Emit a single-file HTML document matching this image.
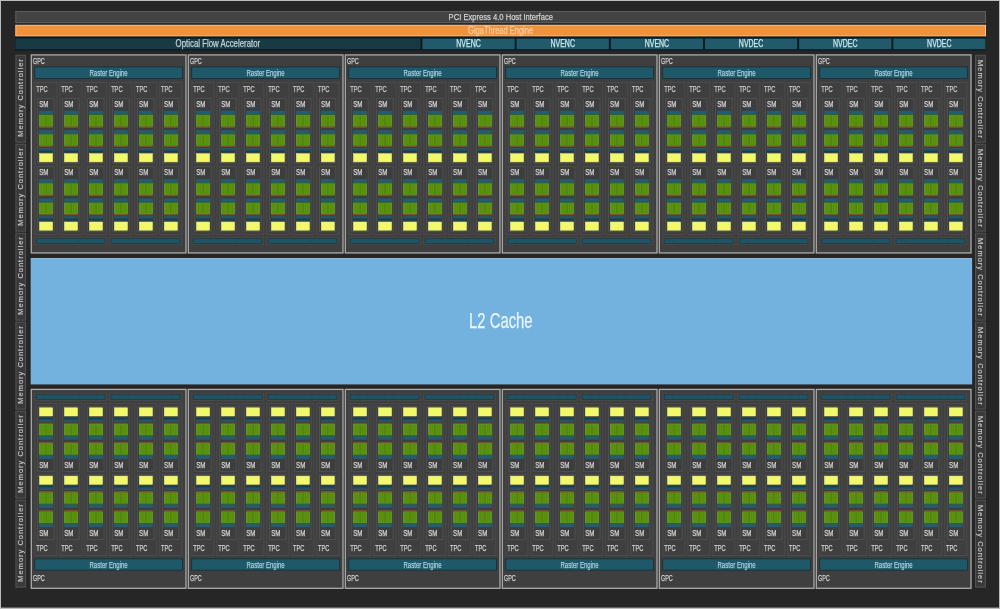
<!DOCTYPE html>
<html><head><meta charset="utf-8"><style>
html,body{margin:0;padding:0;background:#262626;}
svg{display:block;will-change:transform;}
text{font-family:"Liberation Sans",sans-serif;}
</style></head><body>
<svg width="1000" height="609" viewBox="0 0 1000 609">
<defs><g id="sm"><rect x="0.40" y="-0.40" width="16.40" height="64.60" fill="#3d3d3d" stroke="#525252" stroke-width="0.9"/><rect x="1.85" y="12.00" width="13.70" height="3.70" fill="#235d70"/><rect x="1.85" y="15.70" width="13.70" height="12.00" fill="#5b9310"/><rect x="3.90" y="16.30" width="0.60" height="11.00" fill="#548a0e"/><rect x="6.20" y="16.30" width="0.60" height="11.00" fill="#548a0e"/><rect x="10.85" y="16.30" width="0.60" height="11.00" fill="#548a0e"/><rect x="13.15" y="16.30" width="0.60" height="11.00" fill="#548a0e"/><rect x="8.30" y="16.20" width="0.90" height="11.10" fill="#497a10"/><rect x="2.15" y="16.50" width="13.10" height="10.90" fill="none" stroke="#6c9c34" stroke-width="0.6"/><rect x="1.85" y="15.50" width="13.70" height="0.80" fill="#2c5a2c"/><rect x="1.85" y="27.70" width="13.70" height="1.40" fill="#7a5228"/><rect x="1.85" y="31.30" width="13.70" height="3.70" fill="#235d70"/><rect x="1.85" y="35.00" width="13.70" height="11.80" fill="#5b9310"/><rect x="3.90" y="35.60" width="0.60" height="10.80" fill="#548a0e"/><rect x="6.20" y="35.60" width="0.60" height="10.80" fill="#548a0e"/><rect x="10.85" y="35.60" width="0.60" height="10.80" fill="#548a0e"/><rect x="13.15" y="35.60" width="0.60" height="10.80" fill="#548a0e"/><rect x="8.30" y="35.50" width="0.90" height="10.90" fill="#497a10"/><rect x="2.15" y="35.80" width="13.10" height="10.70" fill="none" stroke="#6c9c34" stroke-width="0.6"/><rect x="1.85" y="34.80" width="13.70" height="0.80" fill="#2c5a2c"/><rect x="1.85" y="46.80" width="13.70" height="1.40" fill="#7a5228"/><rect x="1.85" y="49.20" width="13.70" height="4.30" fill="#1e4a5a"/><rect x="1.85" y="49.20" width="13.70" height="1.60" fill="#285868"/><rect x="1.85" y="52.20" width="13.70" height="0.60" fill="#163642"/><rect x="2.15" y="54.90" width="13.10" height="8.20" fill="#f1f96b" stroke="#f3f98c" stroke-width="0.5"/></g><g id="tpc"><rect x="0.50" y="0.00" width="22.00" height="152.10" fill="#3f3f3f" stroke="#4b4b4b" stroke-width="1"/><use href="#sm" x="2.90" y="16.30"/><use href="#sm" x="2.90" y="84.60"/></g><g id="gpc"><use href="#tpc" x="3.80" y="82.50"/><use href="#tpc" x="28.76" y="82.50"/><use href="#tpc" x="53.72" y="82.50"/><use href="#tpc" x="78.68" y="82.50"/><use href="#tpc" x="103.64" y="82.50"/><use href="#tpc" x="128.60" y="82.50"/><rect x="4.30" y="237.70" width="71.40" height="6.40" fill="#3f3f3f" stroke="#4b4b4b" stroke-width="1"/><rect x="5.60" y="238.70" width="68.80" height="4.60" fill="#1f5466" stroke="#1c3840" stroke-width="0.6"/><rect x="13.90" y="239.20" width="0.60" height="3.60" fill="#1d4b5b"/><rect x="22.50" y="239.20" width="0.60" height="3.60" fill="#1d4b5b"/><rect x="31.10" y="239.20" width="0.60" height="3.60" fill="#1d4b5b"/><rect x="39.70" y="239.20" width="0.60" height="3.60" fill="#1d4b5b"/><rect x="48.30" y="239.20" width="0.60" height="3.60" fill="#1d4b5b"/><rect x="56.90" y="239.20" width="0.60" height="3.60" fill="#1d4b5b"/><rect x="65.50" y="239.20" width="0.60" height="3.60" fill="#1d4b5b"/><rect x="79.20" y="237.70" width="71.40" height="6.40" fill="#3f3f3f" stroke="#4b4b4b" stroke-width="1"/><rect x="80.50" y="238.70" width="68.80" height="4.60" fill="#1f5466" stroke="#1c3840" stroke-width="0.6"/><rect x="88.80" y="239.20" width="0.60" height="3.60" fill="#1d4b5b"/><rect x="97.40" y="239.20" width="0.60" height="3.60" fill="#1d4b5b"/><rect x="106.00" y="239.20" width="0.60" height="3.60" fill="#1d4b5b"/><rect x="114.60" y="239.20" width="0.60" height="3.60" fill="#1d4b5b"/><rect x="123.20" y="239.20" width="0.60" height="3.60" fill="#1d4b5b"/><rect x="131.80" y="239.20" width="0.60" height="3.60" fill="#1d4b5b"/><rect x="140.40" y="239.20" width="0.60" height="3.60" fill="#1d4b5b"/></g></defs>
<rect x="0.00" y="0.00" width="1000.00" height="609.00" fill="#bcbcbc"/>
<rect x="1.00" y="1.00" width="998.00" height="606.60" fill="#262626"/>
<rect x="15.80" y="11.60" width="969.70" height="11.00" fill="#434343" stroke="#606060" stroke-width="1"/>
<text x="500.80" y="19.60" font-size="9.88" fill="#d2d2d2" text-anchor="middle" textLength="104.40" lengthAdjust="spacingAndGlyphs" stroke="#d2d2d2" stroke-width="0.25">PCI Express 4.0 Host Interface</text>
<rect x="15.80" y="25.30" width="969.70" height="10.60" fill="#f0913b" stroke="#fbc492" stroke-width="1"/>
<text x="500.60" y="33.50" font-size="10.47" fill="#fccfa6" text-anchor="middle" textLength="65.00" lengthAdjust="spacingAndGlyphs" stroke="#fccfa6" stroke-width="0.25">GigaThread Engine</text>
<rect x="15.00" y="36.80" width="970.80" height="13.60" fill="#0c1b1f"/>
<rect x="15.40" y="38.60" width="405.00" height="10.60" fill="#183a44"/>
<text x="217.90" y="47.40" font-size="10.61" fill="#c3d3d6" text-anchor="middle" textLength="84.60" lengthAdjust="spacingAndGlyphs" stroke="#c3d3d6" stroke-width="0.25">Optical Flow Accelerator</text>
<rect x="422.40" y="38.60" width="92.30" height="10.60" fill="#215a6a"/>
<text x="468.55" y="47.30" font-size="10.76" fill="#cdeaf2" text-anchor="middle" textLength="24.50" lengthAdjust="spacingAndGlyphs" stroke="#cdeaf2" stroke-width="0.25">NVENC</text>
<rect x="516.58" y="38.60" width="92.30" height="10.60" fill="#215a6a"/>
<text x="562.73" y="47.30" font-size="10.76" fill="#cdeaf2" text-anchor="middle" textLength="24.50" lengthAdjust="spacingAndGlyphs" stroke="#cdeaf2" stroke-width="0.25">NVENC</text>
<rect x="610.76" y="38.60" width="92.30" height="10.60" fill="#215a6a"/>
<text x="656.91" y="47.30" font-size="10.76" fill="#cdeaf2" text-anchor="middle" textLength="24.50" lengthAdjust="spacingAndGlyphs" stroke="#cdeaf2" stroke-width="0.25">NVENC</text>
<rect x="704.94" y="38.60" width="92.30" height="10.60" fill="#215a6a"/>
<text x="751.09" y="47.30" font-size="10.76" fill="#cdeaf2" text-anchor="middle" textLength="24.50" lengthAdjust="spacingAndGlyphs" stroke="#cdeaf2" stroke-width="0.25">NVDEC</text>
<rect x="799.12" y="38.60" width="92.30" height="10.60" fill="#215a6a"/>
<text x="845.27" y="47.30" font-size="10.76" fill="#cdeaf2" text-anchor="middle" textLength="24.50" lengthAdjust="spacingAndGlyphs" stroke="#cdeaf2" stroke-width="0.25">NVDEC</text>
<rect x="893.30" y="38.60" width="92.10" height="10.60" fill="#215a6a"/>
<text x="939.35" y="47.30" font-size="10.76" fill="#cdeaf2" text-anchor="middle" textLength="24.50" lengthAdjust="spacingAndGlyphs" stroke="#cdeaf2" stroke-width="0.25">NVDEC</text>
<rect x="15.90" y="55.20" width="9.70" height="86.90" fill="#393939" stroke="#555555" stroke-width="1"/>
<g transform="translate(20.75,97.95) rotate(-90)">
<text x="0.00" y="2.70" font-size="7.50" fill="#cacaca" text-anchor="middle" textLength="77.60" lengthAdjust="spacing" stroke="#cacaca" stroke-width="0.15">Memory Controller</text>
</g>
<rect x="15.90" y="144.20" width="9.70" height="86.90" fill="#393939" stroke="#555555" stroke-width="1"/>
<g transform="translate(20.75,186.95) rotate(-90)">
<text x="0.00" y="2.70" font-size="7.50" fill="#cacaca" text-anchor="middle" textLength="77.60" lengthAdjust="spacing" stroke="#cacaca" stroke-width="0.15">Memory Controller</text>
</g>
<rect x="15.90" y="233.20" width="9.70" height="86.90" fill="#393939" stroke="#555555" stroke-width="1"/>
<g transform="translate(20.75,275.95) rotate(-90)">
<text x="0.00" y="2.70" font-size="7.50" fill="#cacaca" text-anchor="middle" textLength="77.60" lengthAdjust="spacing" stroke="#cacaca" stroke-width="0.15">Memory Controller</text>
</g>
<rect x="15.90" y="322.20" width="9.70" height="86.90" fill="#393939" stroke="#555555" stroke-width="1"/>
<g transform="translate(20.75,364.95) rotate(-90)">
<text x="0.00" y="2.70" font-size="7.50" fill="#cacaca" text-anchor="middle" textLength="77.60" lengthAdjust="spacing" stroke="#cacaca" stroke-width="0.15">Memory Controller</text>
</g>
<rect x="15.90" y="411.20" width="9.70" height="86.90" fill="#393939" stroke="#555555" stroke-width="1"/>
<g transform="translate(20.75,453.95) rotate(-90)">
<text x="0.00" y="2.70" font-size="7.50" fill="#cacaca" text-anchor="middle" textLength="77.60" lengthAdjust="spacing" stroke="#cacaca" stroke-width="0.15">Memory Controller</text>
</g>
<rect x="15.90" y="500.20" width="9.70" height="86.90" fill="#393939" stroke="#555555" stroke-width="1"/>
<g transform="translate(20.75,542.95) rotate(-90)">
<text x="0.00" y="2.70" font-size="7.50" fill="#cacaca" text-anchor="middle" textLength="77.60" lengthAdjust="spacing" stroke="#cacaca" stroke-width="0.15">Memory Controller</text>
</g>
<rect x="975.60" y="55.20" width="9.70" height="86.90" fill="#393939" stroke="#555555" stroke-width="1"/>
<g transform="translate(980.45,98.85) rotate(90)">
<text x="0.00" y="2.60" font-size="7.50" fill="#cacaca" text-anchor="middle" textLength="77.60" lengthAdjust="spacing" stroke="#cacaca" stroke-width="0.15">Memory Controller</text>
</g>
<rect x="975.60" y="144.20" width="9.70" height="86.90" fill="#393939" stroke="#555555" stroke-width="1"/>
<g transform="translate(980.45,187.85) rotate(90)">
<text x="0.00" y="2.60" font-size="7.50" fill="#cacaca" text-anchor="middle" textLength="77.60" lengthAdjust="spacing" stroke="#cacaca" stroke-width="0.15">Memory Controller</text>
</g>
<rect x="975.60" y="233.20" width="9.70" height="86.90" fill="#393939" stroke="#555555" stroke-width="1"/>
<g transform="translate(980.45,276.85) rotate(90)">
<text x="0.00" y="2.60" font-size="7.50" fill="#cacaca" text-anchor="middle" textLength="77.60" lengthAdjust="spacing" stroke="#cacaca" stroke-width="0.15">Memory Controller</text>
</g>
<rect x="975.60" y="322.20" width="9.70" height="86.90" fill="#393939" stroke="#555555" stroke-width="1"/>
<g transform="translate(980.45,365.85) rotate(90)">
<text x="0.00" y="2.60" font-size="7.50" fill="#cacaca" text-anchor="middle" textLength="77.60" lengthAdjust="spacing" stroke="#cacaca" stroke-width="0.15">Memory Controller</text>
</g>
<rect x="975.60" y="411.20" width="9.70" height="86.90" fill="#393939" stroke="#555555" stroke-width="1"/>
<g transform="translate(980.45,454.85) rotate(90)">
<text x="0.00" y="2.60" font-size="7.50" fill="#cacaca" text-anchor="middle" textLength="77.60" lengthAdjust="spacing" stroke="#cacaca" stroke-width="0.15">Memory Controller</text>
</g>
<rect x="975.60" y="500.20" width="9.70" height="86.90" fill="#393939" stroke="#555555" stroke-width="1"/>
<g transform="translate(980.45,543.85) rotate(90)">
<text x="0.00" y="2.60" font-size="7.50" fill="#cacaca" text-anchor="middle" textLength="77.60" lengthAdjust="spacing" stroke="#cacaca" stroke-width="0.15">Memory Controller</text>
</g>
<rect x="31.20" y="258.50" width="940.40" height="125.40" fill="#73b2de" stroke="#84bce4" stroke-width="1"/>
<text x="500.80" y="327.50" font-size="21.80" fill="#eaf5fc" text-anchor="middle" textLength="63.50" lengthAdjust="spacingAndGlyphs" stroke="#eaf5fc" stroke-width="0.25">L2 Cache</text>
<rect x="31.30" y="54.90" width="154.70" height="198.05" fill="#3f3f3f" stroke="#ababab" stroke-width="1.3"/>
<use href="#gpc" x="30.65" y="0"/>
<rect x="34.65" y="66.90" width="147.90" height="11.60" fill="#1f5869" stroke="#1f3238" stroke-width="1.0"/>
<text x="32.95" y="63.80" font-size="9.59" fill="#d0d0d0" text-anchor="start" textLength="11.80" lengthAdjust="spacingAndGlyphs" stroke="#d0d0d0" stroke-width="0.25">GPC</text>
<text x="108.60" y="75.90" font-size="9.88" fill="#a9d2de" text-anchor="middle" textLength="38.20" lengthAdjust="spacingAndGlyphs" stroke="#a9d2de" stroke-width="0.25">Raster Engine</text>
<text x="36.25" y="91.60" font-size="9.59" fill="#cacaca" text-anchor="start" textLength="11.40" lengthAdjust="spacingAndGlyphs" stroke="#cacaca" stroke-width="0.25">TPC</text>
<text x="39.25" y="106.60" font-size="9.16" fill="#d6d6d6" text-anchor="start" textLength="9.20" lengthAdjust="spacingAndGlyphs" stroke="#d6d6d6" stroke-width="0.25">SM</text>
<text x="39.25" y="174.90" font-size="9.16" fill="#d6d6d6" text-anchor="start" textLength="9.20" lengthAdjust="spacingAndGlyphs" stroke="#d6d6d6" stroke-width="0.25">SM</text>
<text x="61.21" y="91.60" font-size="9.59" fill="#cacaca" text-anchor="start" textLength="11.40" lengthAdjust="spacingAndGlyphs" stroke="#cacaca" stroke-width="0.25">TPC</text>
<text x="64.21" y="106.60" font-size="9.16" fill="#d6d6d6" text-anchor="start" textLength="9.20" lengthAdjust="spacingAndGlyphs" stroke="#d6d6d6" stroke-width="0.25">SM</text>
<text x="64.21" y="174.90" font-size="9.16" fill="#d6d6d6" text-anchor="start" textLength="9.20" lengthAdjust="spacingAndGlyphs" stroke="#d6d6d6" stroke-width="0.25">SM</text>
<text x="86.17" y="91.60" font-size="9.59" fill="#cacaca" text-anchor="start" textLength="11.40" lengthAdjust="spacingAndGlyphs" stroke="#cacaca" stroke-width="0.25">TPC</text>
<text x="89.17" y="106.60" font-size="9.16" fill="#d6d6d6" text-anchor="start" textLength="9.20" lengthAdjust="spacingAndGlyphs" stroke="#d6d6d6" stroke-width="0.25">SM</text>
<text x="89.17" y="174.90" font-size="9.16" fill="#d6d6d6" text-anchor="start" textLength="9.20" lengthAdjust="spacingAndGlyphs" stroke="#d6d6d6" stroke-width="0.25">SM</text>
<text x="111.13" y="91.60" font-size="9.59" fill="#cacaca" text-anchor="start" textLength="11.40" lengthAdjust="spacingAndGlyphs" stroke="#cacaca" stroke-width="0.25">TPC</text>
<text x="114.13" y="106.60" font-size="9.16" fill="#d6d6d6" text-anchor="start" textLength="9.20" lengthAdjust="spacingAndGlyphs" stroke="#d6d6d6" stroke-width="0.25">SM</text>
<text x="114.13" y="174.90" font-size="9.16" fill="#d6d6d6" text-anchor="start" textLength="9.20" lengthAdjust="spacingAndGlyphs" stroke="#d6d6d6" stroke-width="0.25">SM</text>
<text x="136.09" y="91.60" font-size="9.59" fill="#cacaca" text-anchor="start" textLength="11.40" lengthAdjust="spacingAndGlyphs" stroke="#cacaca" stroke-width="0.25">TPC</text>
<text x="139.09" y="106.60" font-size="9.16" fill="#d6d6d6" text-anchor="start" textLength="9.20" lengthAdjust="spacingAndGlyphs" stroke="#d6d6d6" stroke-width="0.25">SM</text>
<text x="139.09" y="174.90" font-size="9.16" fill="#d6d6d6" text-anchor="start" textLength="9.20" lengthAdjust="spacingAndGlyphs" stroke="#d6d6d6" stroke-width="0.25">SM</text>
<text x="161.05" y="91.60" font-size="9.59" fill="#cacaca" text-anchor="start" textLength="11.40" lengthAdjust="spacingAndGlyphs" stroke="#cacaca" stroke-width="0.25">TPC</text>
<text x="164.05" y="106.60" font-size="9.16" fill="#d6d6d6" text-anchor="start" textLength="9.20" lengthAdjust="spacingAndGlyphs" stroke="#d6d6d6" stroke-width="0.25">SM</text>
<text x="164.05" y="174.90" font-size="9.16" fill="#d6d6d6" text-anchor="start" textLength="9.20" lengthAdjust="spacingAndGlyphs" stroke="#d6d6d6" stroke-width="0.25">SM</text>
<rect x="31.30" y="389.40" width="154.70" height="198.90" fill="#3f3f3f" stroke="#ababab" stroke-width="1.3"/>
<use href="#gpc" transform="translate(30.65,638.0) scale(1,-1)"/>
<rect x="34.65" y="558.80" width="147.90" height="11.40" fill="#1f5869" stroke="#1f3238" stroke-width="1.0"/>
<text x="32.95" y="580.60" font-size="9.88" fill="#d0d0d0" text-anchor="start" textLength="11.80" lengthAdjust="spacingAndGlyphs" stroke="#d0d0d0" stroke-width="0.25">GPC</text>
<text x="108.60" y="567.70" font-size="9.88" fill="#a9d2de" text-anchor="middle" textLength="38.20" lengthAdjust="spacingAndGlyphs" stroke="#a9d2de" stroke-width="0.25">Raster Engine</text>
<text x="36.25" y="551.30" font-size="9.30" fill="#d0d0d0" text-anchor="start" textLength="11.40" lengthAdjust="spacingAndGlyphs" stroke="#d0d0d0" stroke-width="0.25">TPC</text>
<text x="39.25" y="535.90" font-size="9.16" fill="#d6d6d6" text-anchor="start" textLength="9.20" lengthAdjust="spacingAndGlyphs" stroke="#d6d6d6" stroke-width="0.25">SM</text>
<text x="39.25" y="467.60" font-size="9.16" fill="#d6d6d6" text-anchor="start" textLength="9.20" lengthAdjust="spacingAndGlyphs" stroke="#d6d6d6" stroke-width="0.25">SM</text>
<text x="61.21" y="551.30" font-size="9.30" fill="#d0d0d0" text-anchor="start" textLength="11.40" lengthAdjust="spacingAndGlyphs" stroke="#d0d0d0" stroke-width="0.25">TPC</text>
<text x="64.21" y="535.90" font-size="9.16" fill="#d6d6d6" text-anchor="start" textLength="9.20" lengthAdjust="spacingAndGlyphs" stroke="#d6d6d6" stroke-width="0.25">SM</text>
<text x="64.21" y="467.60" font-size="9.16" fill="#d6d6d6" text-anchor="start" textLength="9.20" lengthAdjust="spacingAndGlyphs" stroke="#d6d6d6" stroke-width="0.25">SM</text>
<text x="86.17" y="551.30" font-size="9.30" fill="#d0d0d0" text-anchor="start" textLength="11.40" lengthAdjust="spacingAndGlyphs" stroke="#d0d0d0" stroke-width="0.25">TPC</text>
<text x="89.17" y="535.90" font-size="9.16" fill="#d6d6d6" text-anchor="start" textLength="9.20" lengthAdjust="spacingAndGlyphs" stroke="#d6d6d6" stroke-width="0.25">SM</text>
<text x="89.17" y="467.60" font-size="9.16" fill="#d6d6d6" text-anchor="start" textLength="9.20" lengthAdjust="spacingAndGlyphs" stroke="#d6d6d6" stroke-width="0.25">SM</text>
<text x="111.13" y="551.30" font-size="9.30" fill="#d0d0d0" text-anchor="start" textLength="11.40" lengthAdjust="spacingAndGlyphs" stroke="#d0d0d0" stroke-width="0.25">TPC</text>
<text x="114.13" y="535.90" font-size="9.16" fill="#d6d6d6" text-anchor="start" textLength="9.20" lengthAdjust="spacingAndGlyphs" stroke="#d6d6d6" stroke-width="0.25">SM</text>
<text x="114.13" y="467.60" font-size="9.16" fill="#d6d6d6" text-anchor="start" textLength="9.20" lengthAdjust="spacingAndGlyphs" stroke="#d6d6d6" stroke-width="0.25">SM</text>
<text x="136.09" y="551.30" font-size="9.30" fill="#d0d0d0" text-anchor="start" textLength="11.40" lengthAdjust="spacingAndGlyphs" stroke="#d0d0d0" stroke-width="0.25">TPC</text>
<text x="139.09" y="535.90" font-size="9.16" fill="#d6d6d6" text-anchor="start" textLength="9.20" lengthAdjust="spacingAndGlyphs" stroke="#d6d6d6" stroke-width="0.25">SM</text>
<text x="139.09" y="467.60" font-size="9.16" fill="#d6d6d6" text-anchor="start" textLength="9.20" lengthAdjust="spacingAndGlyphs" stroke="#d6d6d6" stroke-width="0.25">SM</text>
<text x="161.05" y="551.30" font-size="9.30" fill="#d0d0d0" text-anchor="start" textLength="11.40" lengthAdjust="spacingAndGlyphs" stroke="#d0d0d0" stroke-width="0.25">TPC</text>
<text x="164.05" y="535.90" font-size="9.16" fill="#d6d6d6" text-anchor="start" textLength="9.20" lengthAdjust="spacingAndGlyphs" stroke="#d6d6d6" stroke-width="0.25">SM</text>
<text x="164.05" y="467.60" font-size="9.16" fill="#d6d6d6" text-anchor="start" textLength="9.20" lengthAdjust="spacingAndGlyphs" stroke="#d6d6d6" stroke-width="0.25">SM</text>
<rect x="188.30" y="54.90" width="154.70" height="198.05" fill="#3f3f3f" stroke="#ababab" stroke-width="1.3"/>
<use href="#gpc" x="187.65" y="0"/>
<rect x="191.65" y="66.90" width="147.90" height="11.60" fill="#1f5869" stroke="#1f3238" stroke-width="1.0"/>
<text x="189.95" y="63.80" font-size="9.59" fill="#d0d0d0" text-anchor="start" textLength="11.80" lengthAdjust="spacingAndGlyphs" stroke="#d0d0d0" stroke-width="0.25">GPC</text>
<text x="265.60" y="75.90" font-size="9.88" fill="#a9d2de" text-anchor="middle" textLength="38.20" lengthAdjust="spacingAndGlyphs" stroke="#a9d2de" stroke-width="0.25">Raster Engine</text>
<text x="193.25" y="91.60" font-size="9.59" fill="#cacaca" text-anchor="start" textLength="11.40" lengthAdjust="spacingAndGlyphs" stroke="#cacaca" stroke-width="0.25">TPC</text>
<text x="196.25" y="106.60" font-size="9.16" fill="#d6d6d6" text-anchor="start" textLength="9.20" lengthAdjust="spacingAndGlyphs" stroke="#d6d6d6" stroke-width="0.25">SM</text>
<text x="196.25" y="174.90" font-size="9.16" fill="#d6d6d6" text-anchor="start" textLength="9.20" lengthAdjust="spacingAndGlyphs" stroke="#d6d6d6" stroke-width="0.25">SM</text>
<text x="218.21" y="91.60" font-size="9.59" fill="#cacaca" text-anchor="start" textLength="11.40" lengthAdjust="spacingAndGlyphs" stroke="#cacaca" stroke-width="0.25">TPC</text>
<text x="221.21" y="106.60" font-size="9.16" fill="#d6d6d6" text-anchor="start" textLength="9.20" lengthAdjust="spacingAndGlyphs" stroke="#d6d6d6" stroke-width="0.25">SM</text>
<text x="221.21" y="174.90" font-size="9.16" fill="#d6d6d6" text-anchor="start" textLength="9.20" lengthAdjust="spacingAndGlyphs" stroke="#d6d6d6" stroke-width="0.25">SM</text>
<text x="243.17" y="91.60" font-size="9.59" fill="#cacaca" text-anchor="start" textLength="11.40" lengthAdjust="spacingAndGlyphs" stroke="#cacaca" stroke-width="0.25">TPC</text>
<text x="246.17" y="106.60" font-size="9.16" fill="#d6d6d6" text-anchor="start" textLength="9.20" lengthAdjust="spacingAndGlyphs" stroke="#d6d6d6" stroke-width="0.25">SM</text>
<text x="246.17" y="174.90" font-size="9.16" fill="#d6d6d6" text-anchor="start" textLength="9.20" lengthAdjust="spacingAndGlyphs" stroke="#d6d6d6" stroke-width="0.25">SM</text>
<text x="268.13" y="91.60" font-size="9.59" fill="#cacaca" text-anchor="start" textLength="11.40" lengthAdjust="spacingAndGlyphs" stroke="#cacaca" stroke-width="0.25">TPC</text>
<text x="271.13" y="106.60" font-size="9.16" fill="#d6d6d6" text-anchor="start" textLength="9.20" lengthAdjust="spacingAndGlyphs" stroke="#d6d6d6" stroke-width="0.25">SM</text>
<text x="271.13" y="174.90" font-size="9.16" fill="#d6d6d6" text-anchor="start" textLength="9.20" lengthAdjust="spacingAndGlyphs" stroke="#d6d6d6" stroke-width="0.25">SM</text>
<text x="293.09" y="91.60" font-size="9.59" fill="#cacaca" text-anchor="start" textLength="11.40" lengthAdjust="spacingAndGlyphs" stroke="#cacaca" stroke-width="0.25">TPC</text>
<text x="296.09" y="106.60" font-size="9.16" fill="#d6d6d6" text-anchor="start" textLength="9.20" lengthAdjust="spacingAndGlyphs" stroke="#d6d6d6" stroke-width="0.25">SM</text>
<text x="296.09" y="174.90" font-size="9.16" fill="#d6d6d6" text-anchor="start" textLength="9.20" lengthAdjust="spacingAndGlyphs" stroke="#d6d6d6" stroke-width="0.25">SM</text>
<text x="318.05" y="91.60" font-size="9.59" fill="#cacaca" text-anchor="start" textLength="11.40" lengthAdjust="spacingAndGlyphs" stroke="#cacaca" stroke-width="0.25">TPC</text>
<text x="321.05" y="106.60" font-size="9.16" fill="#d6d6d6" text-anchor="start" textLength="9.20" lengthAdjust="spacingAndGlyphs" stroke="#d6d6d6" stroke-width="0.25">SM</text>
<text x="321.05" y="174.90" font-size="9.16" fill="#d6d6d6" text-anchor="start" textLength="9.20" lengthAdjust="spacingAndGlyphs" stroke="#d6d6d6" stroke-width="0.25">SM</text>
<rect x="188.30" y="389.40" width="154.70" height="198.90" fill="#3f3f3f" stroke="#ababab" stroke-width="1.3"/>
<use href="#gpc" transform="translate(187.65,638.0) scale(1,-1)"/>
<rect x="191.65" y="558.80" width="147.90" height="11.40" fill="#1f5869" stroke="#1f3238" stroke-width="1.0"/>
<text x="189.95" y="580.60" font-size="9.88" fill="#d0d0d0" text-anchor="start" textLength="11.80" lengthAdjust="spacingAndGlyphs" stroke="#d0d0d0" stroke-width="0.25">GPC</text>
<text x="265.60" y="567.70" font-size="9.88" fill="#a9d2de" text-anchor="middle" textLength="38.20" lengthAdjust="spacingAndGlyphs" stroke="#a9d2de" stroke-width="0.25">Raster Engine</text>
<text x="193.25" y="551.30" font-size="9.30" fill="#d0d0d0" text-anchor="start" textLength="11.40" lengthAdjust="spacingAndGlyphs" stroke="#d0d0d0" stroke-width="0.25">TPC</text>
<text x="196.25" y="535.90" font-size="9.16" fill="#d6d6d6" text-anchor="start" textLength="9.20" lengthAdjust="spacingAndGlyphs" stroke="#d6d6d6" stroke-width="0.25">SM</text>
<text x="196.25" y="467.60" font-size="9.16" fill="#d6d6d6" text-anchor="start" textLength="9.20" lengthAdjust="spacingAndGlyphs" stroke="#d6d6d6" stroke-width="0.25">SM</text>
<text x="218.21" y="551.30" font-size="9.30" fill="#d0d0d0" text-anchor="start" textLength="11.40" lengthAdjust="spacingAndGlyphs" stroke="#d0d0d0" stroke-width="0.25">TPC</text>
<text x="221.21" y="535.90" font-size="9.16" fill="#d6d6d6" text-anchor="start" textLength="9.20" lengthAdjust="spacingAndGlyphs" stroke="#d6d6d6" stroke-width="0.25">SM</text>
<text x="221.21" y="467.60" font-size="9.16" fill="#d6d6d6" text-anchor="start" textLength="9.20" lengthAdjust="spacingAndGlyphs" stroke="#d6d6d6" stroke-width="0.25">SM</text>
<text x="243.17" y="551.30" font-size="9.30" fill="#d0d0d0" text-anchor="start" textLength="11.40" lengthAdjust="spacingAndGlyphs" stroke="#d0d0d0" stroke-width="0.25">TPC</text>
<text x="246.17" y="535.90" font-size="9.16" fill="#d6d6d6" text-anchor="start" textLength="9.20" lengthAdjust="spacingAndGlyphs" stroke="#d6d6d6" stroke-width="0.25">SM</text>
<text x="246.17" y="467.60" font-size="9.16" fill="#d6d6d6" text-anchor="start" textLength="9.20" lengthAdjust="spacingAndGlyphs" stroke="#d6d6d6" stroke-width="0.25">SM</text>
<text x="268.13" y="551.30" font-size="9.30" fill="#d0d0d0" text-anchor="start" textLength="11.40" lengthAdjust="spacingAndGlyphs" stroke="#d0d0d0" stroke-width="0.25">TPC</text>
<text x="271.13" y="535.90" font-size="9.16" fill="#d6d6d6" text-anchor="start" textLength="9.20" lengthAdjust="spacingAndGlyphs" stroke="#d6d6d6" stroke-width="0.25">SM</text>
<text x="271.13" y="467.60" font-size="9.16" fill="#d6d6d6" text-anchor="start" textLength="9.20" lengthAdjust="spacingAndGlyphs" stroke="#d6d6d6" stroke-width="0.25">SM</text>
<text x="293.09" y="551.30" font-size="9.30" fill="#d0d0d0" text-anchor="start" textLength="11.40" lengthAdjust="spacingAndGlyphs" stroke="#d0d0d0" stroke-width="0.25">TPC</text>
<text x="296.09" y="535.90" font-size="9.16" fill="#d6d6d6" text-anchor="start" textLength="9.20" lengthAdjust="spacingAndGlyphs" stroke="#d6d6d6" stroke-width="0.25">SM</text>
<text x="296.09" y="467.60" font-size="9.16" fill="#d6d6d6" text-anchor="start" textLength="9.20" lengthAdjust="spacingAndGlyphs" stroke="#d6d6d6" stroke-width="0.25">SM</text>
<text x="318.05" y="551.30" font-size="9.30" fill="#d0d0d0" text-anchor="start" textLength="11.40" lengthAdjust="spacingAndGlyphs" stroke="#d0d0d0" stroke-width="0.25">TPC</text>
<text x="321.05" y="535.90" font-size="9.16" fill="#d6d6d6" text-anchor="start" textLength="9.20" lengthAdjust="spacingAndGlyphs" stroke="#d6d6d6" stroke-width="0.25">SM</text>
<text x="321.05" y="467.60" font-size="9.16" fill="#d6d6d6" text-anchor="start" textLength="9.20" lengthAdjust="spacingAndGlyphs" stroke="#d6d6d6" stroke-width="0.25">SM</text>
<rect x="345.30" y="54.90" width="154.70" height="198.05" fill="#3f3f3f" stroke="#ababab" stroke-width="1.3"/>
<use href="#gpc" x="344.65" y="0"/>
<rect x="348.65" y="66.90" width="147.90" height="11.60" fill="#1f5869" stroke="#1f3238" stroke-width="1.0"/>
<text x="346.95" y="63.80" font-size="9.59" fill="#d0d0d0" text-anchor="start" textLength="11.80" lengthAdjust="spacingAndGlyphs" stroke="#d0d0d0" stroke-width="0.25">GPC</text>
<text x="422.60" y="75.90" font-size="9.88" fill="#a9d2de" text-anchor="middle" textLength="38.20" lengthAdjust="spacingAndGlyphs" stroke="#a9d2de" stroke-width="0.25">Raster Engine</text>
<text x="350.25" y="91.60" font-size="9.59" fill="#cacaca" text-anchor="start" textLength="11.40" lengthAdjust="spacingAndGlyphs" stroke="#cacaca" stroke-width="0.25">TPC</text>
<text x="353.25" y="106.60" font-size="9.16" fill="#d6d6d6" text-anchor="start" textLength="9.20" lengthAdjust="spacingAndGlyphs" stroke="#d6d6d6" stroke-width="0.25">SM</text>
<text x="353.25" y="174.90" font-size="9.16" fill="#d6d6d6" text-anchor="start" textLength="9.20" lengthAdjust="spacingAndGlyphs" stroke="#d6d6d6" stroke-width="0.25">SM</text>
<text x="375.21" y="91.60" font-size="9.59" fill="#cacaca" text-anchor="start" textLength="11.40" lengthAdjust="spacingAndGlyphs" stroke="#cacaca" stroke-width="0.25">TPC</text>
<text x="378.21" y="106.60" font-size="9.16" fill="#d6d6d6" text-anchor="start" textLength="9.20" lengthAdjust="spacingAndGlyphs" stroke="#d6d6d6" stroke-width="0.25">SM</text>
<text x="378.21" y="174.90" font-size="9.16" fill="#d6d6d6" text-anchor="start" textLength="9.20" lengthAdjust="spacingAndGlyphs" stroke="#d6d6d6" stroke-width="0.25">SM</text>
<text x="400.17" y="91.60" font-size="9.59" fill="#cacaca" text-anchor="start" textLength="11.40" lengthAdjust="spacingAndGlyphs" stroke="#cacaca" stroke-width="0.25">TPC</text>
<text x="403.17" y="106.60" font-size="9.16" fill="#d6d6d6" text-anchor="start" textLength="9.20" lengthAdjust="spacingAndGlyphs" stroke="#d6d6d6" stroke-width="0.25">SM</text>
<text x="403.17" y="174.90" font-size="9.16" fill="#d6d6d6" text-anchor="start" textLength="9.20" lengthAdjust="spacingAndGlyphs" stroke="#d6d6d6" stroke-width="0.25">SM</text>
<text x="425.13" y="91.60" font-size="9.59" fill="#cacaca" text-anchor="start" textLength="11.40" lengthAdjust="spacingAndGlyphs" stroke="#cacaca" stroke-width="0.25">TPC</text>
<text x="428.13" y="106.60" font-size="9.16" fill="#d6d6d6" text-anchor="start" textLength="9.20" lengthAdjust="spacingAndGlyphs" stroke="#d6d6d6" stroke-width="0.25">SM</text>
<text x="428.13" y="174.90" font-size="9.16" fill="#d6d6d6" text-anchor="start" textLength="9.20" lengthAdjust="spacingAndGlyphs" stroke="#d6d6d6" stroke-width="0.25">SM</text>
<text x="450.09" y="91.60" font-size="9.59" fill="#cacaca" text-anchor="start" textLength="11.40" lengthAdjust="spacingAndGlyphs" stroke="#cacaca" stroke-width="0.25">TPC</text>
<text x="453.09" y="106.60" font-size="9.16" fill="#d6d6d6" text-anchor="start" textLength="9.20" lengthAdjust="spacingAndGlyphs" stroke="#d6d6d6" stroke-width="0.25">SM</text>
<text x="453.09" y="174.90" font-size="9.16" fill="#d6d6d6" text-anchor="start" textLength="9.20" lengthAdjust="spacingAndGlyphs" stroke="#d6d6d6" stroke-width="0.25">SM</text>
<text x="475.05" y="91.60" font-size="9.59" fill="#cacaca" text-anchor="start" textLength="11.40" lengthAdjust="spacingAndGlyphs" stroke="#cacaca" stroke-width="0.25">TPC</text>
<text x="478.05" y="106.60" font-size="9.16" fill="#d6d6d6" text-anchor="start" textLength="9.20" lengthAdjust="spacingAndGlyphs" stroke="#d6d6d6" stroke-width="0.25">SM</text>
<text x="478.05" y="174.90" font-size="9.16" fill="#d6d6d6" text-anchor="start" textLength="9.20" lengthAdjust="spacingAndGlyphs" stroke="#d6d6d6" stroke-width="0.25">SM</text>
<rect x="345.30" y="389.40" width="154.70" height="198.90" fill="#3f3f3f" stroke="#ababab" stroke-width="1.3"/>
<use href="#gpc" transform="translate(344.65,638.0) scale(1,-1)"/>
<rect x="348.65" y="558.80" width="147.90" height="11.40" fill="#1f5869" stroke="#1f3238" stroke-width="1.0"/>
<text x="346.95" y="580.60" font-size="9.88" fill="#d0d0d0" text-anchor="start" textLength="11.80" lengthAdjust="spacingAndGlyphs" stroke="#d0d0d0" stroke-width="0.25">GPC</text>
<text x="422.60" y="567.70" font-size="9.88" fill="#a9d2de" text-anchor="middle" textLength="38.20" lengthAdjust="spacingAndGlyphs" stroke="#a9d2de" stroke-width="0.25">Raster Engine</text>
<text x="350.25" y="551.30" font-size="9.30" fill="#d0d0d0" text-anchor="start" textLength="11.40" lengthAdjust="spacingAndGlyphs" stroke="#d0d0d0" stroke-width="0.25">TPC</text>
<text x="353.25" y="535.90" font-size="9.16" fill="#d6d6d6" text-anchor="start" textLength="9.20" lengthAdjust="spacingAndGlyphs" stroke="#d6d6d6" stroke-width="0.25">SM</text>
<text x="353.25" y="467.60" font-size="9.16" fill="#d6d6d6" text-anchor="start" textLength="9.20" lengthAdjust="spacingAndGlyphs" stroke="#d6d6d6" stroke-width="0.25">SM</text>
<text x="375.21" y="551.30" font-size="9.30" fill="#d0d0d0" text-anchor="start" textLength="11.40" lengthAdjust="spacingAndGlyphs" stroke="#d0d0d0" stroke-width="0.25">TPC</text>
<text x="378.21" y="535.90" font-size="9.16" fill="#d6d6d6" text-anchor="start" textLength="9.20" lengthAdjust="spacingAndGlyphs" stroke="#d6d6d6" stroke-width="0.25">SM</text>
<text x="378.21" y="467.60" font-size="9.16" fill="#d6d6d6" text-anchor="start" textLength="9.20" lengthAdjust="spacingAndGlyphs" stroke="#d6d6d6" stroke-width="0.25">SM</text>
<text x="400.17" y="551.30" font-size="9.30" fill="#d0d0d0" text-anchor="start" textLength="11.40" lengthAdjust="spacingAndGlyphs" stroke="#d0d0d0" stroke-width="0.25">TPC</text>
<text x="403.17" y="535.90" font-size="9.16" fill="#d6d6d6" text-anchor="start" textLength="9.20" lengthAdjust="spacingAndGlyphs" stroke="#d6d6d6" stroke-width="0.25">SM</text>
<text x="403.17" y="467.60" font-size="9.16" fill="#d6d6d6" text-anchor="start" textLength="9.20" lengthAdjust="spacingAndGlyphs" stroke="#d6d6d6" stroke-width="0.25">SM</text>
<text x="425.13" y="551.30" font-size="9.30" fill="#d0d0d0" text-anchor="start" textLength="11.40" lengthAdjust="spacingAndGlyphs" stroke="#d0d0d0" stroke-width="0.25">TPC</text>
<text x="428.13" y="535.90" font-size="9.16" fill="#d6d6d6" text-anchor="start" textLength="9.20" lengthAdjust="spacingAndGlyphs" stroke="#d6d6d6" stroke-width="0.25">SM</text>
<text x="428.13" y="467.60" font-size="9.16" fill="#d6d6d6" text-anchor="start" textLength="9.20" lengthAdjust="spacingAndGlyphs" stroke="#d6d6d6" stroke-width="0.25">SM</text>
<text x="450.09" y="551.30" font-size="9.30" fill="#d0d0d0" text-anchor="start" textLength="11.40" lengthAdjust="spacingAndGlyphs" stroke="#d0d0d0" stroke-width="0.25">TPC</text>
<text x="453.09" y="535.90" font-size="9.16" fill="#d6d6d6" text-anchor="start" textLength="9.20" lengthAdjust="spacingAndGlyphs" stroke="#d6d6d6" stroke-width="0.25">SM</text>
<text x="453.09" y="467.60" font-size="9.16" fill="#d6d6d6" text-anchor="start" textLength="9.20" lengthAdjust="spacingAndGlyphs" stroke="#d6d6d6" stroke-width="0.25">SM</text>
<text x="475.05" y="551.30" font-size="9.30" fill="#d0d0d0" text-anchor="start" textLength="11.40" lengthAdjust="spacingAndGlyphs" stroke="#d0d0d0" stroke-width="0.25">TPC</text>
<text x="478.05" y="535.90" font-size="9.16" fill="#d6d6d6" text-anchor="start" textLength="9.20" lengthAdjust="spacingAndGlyphs" stroke="#d6d6d6" stroke-width="0.25">SM</text>
<text x="478.05" y="467.60" font-size="9.16" fill="#d6d6d6" text-anchor="start" textLength="9.20" lengthAdjust="spacingAndGlyphs" stroke="#d6d6d6" stroke-width="0.25">SM</text>
<rect x="502.30" y="54.90" width="154.70" height="198.05" fill="#3f3f3f" stroke="#ababab" stroke-width="1.3"/>
<use href="#gpc" x="501.65" y="0"/>
<rect x="505.65" y="66.90" width="147.90" height="11.60" fill="#1f5869" stroke="#1f3238" stroke-width="1.0"/>
<text x="503.95" y="63.80" font-size="9.59" fill="#d0d0d0" text-anchor="start" textLength="11.80" lengthAdjust="spacingAndGlyphs" stroke="#d0d0d0" stroke-width="0.25">GPC</text>
<text x="579.60" y="75.90" font-size="9.88" fill="#a9d2de" text-anchor="middle" textLength="38.20" lengthAdjust="spacingAndGlyphs" stroke="#a9d2de" stroke-width="0.25">Raster Engine</text>
<text x="507.25" y="91.60" font-size="9.59" fill="#cacaca" text-anchor="start" textLength="11.40" lengthAdjust="spacingAndGlyphs" stroke="#cacaca" stroke-width="0.25">TPC</text>
<text x="510.25" y="106.60" font-size="9.16" fill="#d6d6d6" text-anchor="start" textLength="9.20" lengthAdjust="spacingAndGlyphs" stroke="#d6d6d6" stroke-width="0.25">SM</text>
<text x="510.25" y="174.90" font-size="9.16" fill="#d6d6d6" text-anchor="start" textLength="9.20" lengthAdjust="spacingAndGlyphs" stroke="#d6d6d6" stroke-width="0.25">SM</text>
<text x="532.21" y="91.60" font-size="9.59" fill="#cacaca" text-anchor="start" textLength="11.40" lengthAdjust="spacingAndGlyphs" stroke="#cacaca" stroke-width="0.25">TPC</text>
<text x="535.21" y="106.60" font-size="9.16" fill="#d6d6d6" text-anchor="start" textLength="9.20" lengthAdjust="spacingAndGlyphs" stroke="#d6d6d6" stroke-width="0.25">SM</text>
<text x="535.21" y="174.90" font-size="9.16" fill="#d6d6d6" text-anchor="start" textLength="9.20" lengthAdjust="spacingAndGlyphs" stroke="#d6d6d6" stroke-width="0.25">SM</text>
<text x="557.17" y="91.60" font-size="9.59" fill="#cacaca" text-anchor="start" textLength="11.40" lengthAdjust="spacingAndGlyphs" stroke="#cacaca" stroke-width="0.25">TPC</text>
<text x="560.17" y="106.60" font-size="9.16" fill="#d6d6d6" text-anchor="start" textLength="9.20" lengthAdjust="spacingAndGlyphs" stroke="#d6d6d6" stroke-width="0.25">SM</text>
<text x="560.17" y="174.90" font-size="9.16" fill="#d6d6d6" text-anchor="start" textLength="9.20" lengthAdjust="spacingAndGlyphs" stroke="#d6d6d6" stroke-width="0.25">SM</text>
<text x="582.13" y="91.60" font-size="9.59" fill="#cacaca" text-anchor="start" textLength="11.40" lengthAdjust="spacingAndGlyphs" stroke="#cacaca" stroke-width="0.25">TPC</text>
<text x="585.13" y="106.60" font-size="9.16" fill="#d6d6d6" text-anchor="start" textLength="9.20" lengthAdjust="spacingAndGlyphs" stroke="#d6d6d6" stroke-width="0.25">SM</text>
<text x="585.13" y="174.90" font-size="9.16" fill="#d6d6d6" text-anchor="start" textLength="9.20" lengthAdjust="spacingAndGlyphs" stroke="#d6d6d6" stroke-width="0.25">SM</text>
<text x="607.09" y="91.60" font-size="9.59" fill="#cacaca" text-anchor="start" textLength="11.40" lengthAdjust="spacingAndGlyphs" stroke="#cacaca" stroke-width="0.25">TPC</text>
<text x="610.09" y="106.60" font-size="9.16" fill="#d6d6d6" text-anchor="start" textLength="9.20" lengthAdjust="spacingAndGlyphs" stroke="#d6d6d6" stroke-width="0.25">SM</text>
<text x="610.09" y="174.90" font-size="9.16" fill="#d6d6d6" text-anchor="start" textLength="9.20" lengthAdjust="spacingAndGlyphs" stroke="#d6d6d6" stroke-width="0.25">SM</text>
<text x="632.05" y="91.60" font-size="9.59" fill="#cacaca" text-anchor="start" textLength="11.40" lengthAdjust="spacingAndGlyphs" stroke="#cacaca" stroke-width="0.25">TPC</text>
<text x="635.05" y="106.60" font-size="9.16" fill="#d6d6d6" text-anchor="start" textLength="9.20" lengthAdjust="spacingAndGlyphs" stroke="#d6d6d6" stroke-width="0.25">SM</text>
<text x="635.05" y="174.90" font-size="9.16" fill="#d6d6d6" text-anchor="start" textLength="9.20" lengthAdjust="spacingAndGlyphs" stroke="#d6d6d6" stroke-width="0.25">SM</text>
<rect x="502.30" y="389.40" width="154.70" height="198.90" fill="#3f3f3f" stroke="#ababab" stroke-width="1.3"/>
<use href="#gpc" transform="translate(501.65,638.0) scale(1,-1)"/>
<rect x="505.65" y="558.80" width="147.90" height="11.40" fill="#1f5869" stroke="#1f3238" stroke-width="1.0"/>
<text x="503.95" y="580.60" font-size="9.88" fill="#d0d0d0" text-anchor="start" textLength="11.80" lengthAdjust="spacingAndGlyphs" stroke="#d0d0d0" stroke-width="0.25">GPC</text>
<text x="579.60" y="567.70" font-size="9.88" fill="#a9d2de" text-anchor="middle" textLength="38.20" lengthAdjust="spacingAndGlyphs" stroke="#a9d2de" stroke-width="0.25">Raster Engine</text>
<text x="507.25" y="551.30" font-size="9.30" fill="#d0d0d0" text-anchor="start" textLength="11.40" lengthAdjust="spacingAndGlyphs" stroke="#d0d0d0" stroke-width="0.25">TPC</text>
<text x="510.25" y="535.90" font-size="9.16" fill="#d6d6d6" text-anchor="start" textLength="9.20" lengthAdjust="spacingAndGlyphs" stroke="#d6d6d6" stroke-width="0.25">SM</text>
<text x="510.25" y="467.60" font-size="9.16" fill="#d6d6d6" text-anchor="start" textLength="9.20" lengthAdjust="spacingAndGlyphs" stroke="#d6d6d6" stroke-width="0.25">SM</text>
<text x="532.21" y="551.30" font-size="9.30" fill="#d0d0d0" text-anchor="start" textLength="11.40" lengthAdjust="spacingAndGlyphs" stroke="#d0d0d0" stroke-width="0.25">TPC</text>
<text x="535.21" y="535.90" font-size="9.16" fill="#d6d6d6" text-anchor="start" textLength="9.20" lengthAdjust="spacingAndGlyphs" stroke="#d6d6d6" stroke-width="0.25">SM</text>
<text x="535.21" y="467.60" font-size="9.16" fill="#d6d6d6" text-anchor="start" textLength="9.20" lengthAdjust="spacingAndGlyphs" stroke="#d6d6d6" stroke-width="0.25">SM</text>
<text x="557.17" y="551.30" font-size="9.30" fill="#d0d0d0" text-anchor="start" textLength="11.40" lengthAdjust="spacingAndGlyphs" stroke="#d0d0d0" stroke-width="0.25">TPC</text>
<text x="560.17" y="535.90" font-size="9.16" fill="#d6d6d6" text-anchor="start" textLength="9.20" lengthAdjust="spacingAndGlyphs" stroke="#d6d6d6" stroke-width="0.25">SM</text>
<text x="560.17" y="467.60" font-size="9.16" fill="#d6d6d6" text-anchor="start" textLength="9.20" lengthAdjust="spacingAndGlyphs" stroke="#d6d6d6" stroke-width="0.25">SM</text>
<text x="582.13" y="551.30" font-size="9.30" fill="#d0d0d0" text-anchor="start" textLength="11.40" lengthAdjust="spacingAndGlyphs" stroke="#d0d0d0" stroke-width="0.25">TPC</text>
<text x="585.13" y="535.90" font-size="9.16" fill="#d6d6d6" text-anchor="start" textLength="9.20" lengthAdjust="spacingAndGlyphs" stroke="#d6d6d6" stroke-width="0.25">SM</text>
<text x="585.13" y="467.60" font-size="9.16" fill="#d6d6d6" text-anchor="start" textLength="9.20" lengthAdjust="spacingAndGlyphs" stroke="#d6d6d6" stroke-width="0.25">SM</text>
<text x="607.09" y="551.30" font-size="9.30" fill="#d0d0d0" text-anchor="start" textLength="11.40" lengthAdjust="spacingAndGlyphs" stroke="#d0d0d0" stroke-width="0.25">TPC</text>
<text x="610.09" y="535.90" font-size="9.16" fill="#d6d6d6" text-anchor="start" textLength="9.20" lengthAdjust="spacingAndGlyphs" stroke="#d6d6d6" stroke-width="0.25">SM</text>
<text x="610.09" y="467.60" font-size="9.16" fill="#d6d6d6" text-anchor="start" textLength="9.20" lengthAdjust="spacingAndGlyphs" stroke="#d6d6d6" stroke-width="0.25">SM</text>
<text x="632.05" y="551.30" font-size="9.30" fill="#d0d0d0" text-anchor="start" textLength="11.40" lengthAdjust="spacingAndGlyphs" stroke="#d0d0d0" stroke-width="0.25">TPC</text>
<text x="635.05" y="535.90" font-size="9.16" fill="#d6d6d6" text-anchor="start" textLength="9.20" lengthAdjust="spacingAndGlyphs" stroke="#d6d6d6" stroke-width="0.25">SM</text>
<text x="635.05" y="467.60" font-size="9.16" fill="#d6d6d6" text-anchor="start" textLength="9.20" lengthAdjust="spacingAndGlyphs" stroke="#d6d6d6" stroke-width="0.25">SM</text>
<rect x="659.30" y="54.90" width="154.70" height="198.05" fill="#3f3f3f" stroke="#ababab" stroke-width="1.3"/>
<use href="#gpc" x="658.65" y="0"/>
<rect x="662.65" y="66.90" width="147.90" height="11.60" fill="#1f5869" stroke="#1f3238" stroke-width="1.0"/>
<text x="660.95" y="63.80" font-size="9.59" fill="#d0d0d0" text-anchor="start" textLength="11.80" lengthAdjust="spacingAndGlyphs" stroke="#d0d0d0" stroke-width="0.25">GPC</text>
<text x="736.60" y="75.90" font-size="9.88" fill="#a9d2de" text-anchor="middle" textLength="38.20" lengthAdjust="spacingAndGlyphs" stroke="#a9d2de" stroke-width="0.25">Raster Engine</text>
<text x="664.25" y="91.60" font-size="9.59" fill="#cacaca" text-anchor="start" textLength="11.40" lengthAdjust="spacingAndGlyphs" stroke="#cacaca" stroke-width="0.25">TPC</text>
<text x="667.25" y="106.60" font-size="9.16" fill="#d6d6d6" text-anchor="start" textLength="9.20" lengthAdjust="spacingAndGlyphs" stroke="#d6d6d6" stroke-width="0.25">SM</text>
<text x="667.25" y="174.90" font-size="9.16" fill="#d6d6d6" text-anchor="start" textLength="9.20" lengthAdjust="spacingAndGlyphs" stroke="#d6d6d6" stroke-width="0.25">SM</text>
<text x="689.21" y="91.60" font-size="9.59" fill="#cacaca" text-anchor="start" textLength="11.40" lengthAdjust="spacingAndGlyphs" stroke="#cacaca" stroke-width="0.25">TPC</text>
<text x="692.21" y="106.60" font-size="9.16" fill="#d6d6d6" text-anchor="start" textLength="9.20" lengthAdjust="spacingAndGlyphs" stroke="#d6d6d6" stroke-width="0.25">SM</text>
<text x="692.21" y="174.90" font-size="9.16" fill="#d6d6d6" text-anchor="start" textLength="9.20" lengthAdjust="spacingAndGlyphs" stroke="#d6d6d6" stroke-width="0.25">SM</text>
<text x="714.17" y="91.60" font-size="9.59" fill="#cacaca" text-anchor="start" textLength="11.40" lengthAdjust="spacingAndGlyphs" stroke="#cacaca" stroke-width="0.25">TPC</text>
<text x="717.17" y="106.60" font-size="9.16" fill="#d6d6d6" text-anchor="start" textLength="9.20" lengthAdjust="spacingAndGlyphs" stroke="#d6d6d6" stroke-width="0.25">SM</text>
<text x="717.17" y="174.90" font-size="9.16" fill="#d6d6d6" text-anchor="start" textLength="9.20" lengthAdjust="spacingAndGlyphs" stroke="#d6d6d6" stroke-width="0.25">SM</text>
<text x="739.13" y="91.60" font-size="9.59" fill="#cacaca" text-anchor="start" textLength="11.40" lengthAdjust="spacingAndGlyphs" stroke="#cacaca" stroke-width="0.25">TPC</text>
<text x="742.13" y="106.60" font-size="9.16" fill="#d6d6d6" text-anchor="start" textLength="9.20" lengthAdjust="spacingAndGlyphs" stroke="#d6d6d6" stroke-width="0.25">SM</text>
<text x="742.13" y="174.90" font-size="9.16" fill="#d6d6d6" text-anchor="start" textLength="9.20" lengthAdjust="spacingAndGlyphs" stroke="#d6d6d6" stroke-width="0.25">SM</text>
<text x="764.09" y="91.60" font-size="9.59" fill="#cacaca" text-anchor="start" textLength="11.40" lengthAdjust="spacingAndGlyphs" stroke="#cacaca" stroke-width="0.25">TPC</text>
<text x="767.09" y="106.60" font-size="9.16" fill="#d6d6d6" text-anchor="start" textLength="9.20" lengthAdjust="spacingAndGlyphs" stroke="#d6d6d6" stroke-width="0.25">SM</text>
<text x="767.09" y="174.90" font-size="9.16" fill="#d6d6d6" text-anchor="start" textLength="9.20" lengthAdjust="spacingAndGlyphs" stroke="#d6d6d6" stroke-width="0.25">SM</text>
<text x="789.05" y="91.60" font-size="9.59" fill="#cacaca" text-anchor="start" textLength="11.40" lengthAdjust="spacingAndGlyphs" stroke="#cacaca" stroke-width="0.25">TPC</text>
<text x="792.05" y="106.60" font-size="9.16" fill="#d6d6d6" text-anchor="start" textLength="9.20" lengthAdjust="spacingAndGlyphs" stroke="#d6d6d6" stroke-width="0.25">SM</text>
<text x="792.05" y="174.90" font-size="9.16" fill="#d6d6d6" text-anchor="start" textLength="9.20" lengthAdjust="spacingAndGlyphs" stroke="#d6d6d6" stroke-width="0.25">SM</text>
<rect x="659.30" y="389.40" width="154.70" height="198.90" fill="#3f3f3f" stroke="#ababab" stroke-width="1.3"/>
<use href="#gpc" transform="translate(658.65,638.0) scale(1,-1)"/>
<rect x="662.65" y="558.80" width="147.90" height="11.40" fill="#1f5869" stroke="#1f3238" stroke-width="1.0"/>
<text x="660.95" y="580.60" font-size="9.88" fill="#d0d0d0" text-anchor="start" textLength="11.80" lengthAdjust="spacingAndGlyphs" stroke="#d0d0d0" stroke-width="0.25">GPC</text>
<text x="736.60" y="567.70" font-size="9.88" fill="#a9d2de" text-anchor="middle" textLength="38.20" lengthAdjust="spacingAndGlyphs" stroke="#a9d2de" stroke-width="0.25">Raster Engine</text>
<text x="664.25" y="551.30" font-size="9.30" fill="#d0d0d0" text-anchor="start" textLength="11.40" lengthAdjust="spacingAndGlyphs" stroke="#d0d0d0" stroke-width="0.25">TPC</text>
<text x="667.25" y="535.90" font-size="9.16" fill="#d6d6d6" text-anchor="start" textLength="9.20" lengthAdjust="spacingAndGlyphs" stroke="#d6d6d6" stroke-width="0.25">SM</text>
<text x="667.25" y="467.60" font-size="9.16" fill="#d6d6d6" text-anchor="start" textLength="9.20" lengthAdjust="spacingAndGlyphs" stroke="#d6d6d6" stroke-width="0.25">SM</text>
<text x="689.21" y="551.30" font-size="9.30" fill="#d0d0d0" text-anchor="start" textLength="11.40" lengthAdjust="spacingAndGlyphs" stroke="#d0d0d0" stroke-width="0.25">TPC</text>
<text x="692.21" y="535.90" font-size="9.16" fill="#d6d6d6" text-anchor="start" textLength="9.20" lengthAdjust="spacingAndGlyphs" stroke="#d6d6d6" stroke-width="0.25">SM</text>
<text x="692.21" y="467.60" font-size="9.16" fill="#d6d6d6" text-anchor="start" textLength="9.20" lengthAdjust="spacingAndGlyphs" stroke="#d6d6d6" stroke-width="0.25">SM</text>
<text x="714.17" y="551.30" font-size="9.30" fill="#d0d0d0" text-anchor="start" textLength="11.40" lengthAdjust="spacingAndGlyphs" stroke="#d0d0d0" stroke-width="0.25">TPC</text>
<text x="717.17" y="535.90" font-size="9.16" fill="#d6d6d6" text-anchor="start" textLength="9.20" lengthAdjust="spacingAndGlyphs" stroke="#d6d6d6" stroke-width="0.25">SM</text>
<text x="717.17" y="467.60" font-size="9.16" fill="#d6d6d6" text-anchor="start" textLength="9.20" lengthAdjust="spacingAndGlyphs" stroke="#d6d6d6" stroke-width="0.25">SM</text>
<text x="739.13" y="551.30" font-size="9.30" fill="#d0d0d0" text-anchor="start" textLength="11.40" lengthAdjust="spacingAndGlyphs" stroke="#d0d0d0" stroke-width="0.25">TPC</text>
<text x="742.13" y="535.90" font-size="9.16" fill="#d6d6d6" text-anchor="start" textLength="9.20" lengthAdjust="spacingAndGlyphs" stroke="#d6d6d6" stroke-width="0.25">SM</text>
<text x="742.13" y="467.60" font-size="9.16" fill="#d6d6d6" text-anchor="start" textLength="9.20" lengthAdjust="spacingAndGlyphs" stroke="#d6d6d6" stroke-width="0.25">SM</text>
<text x="764.09" y="551.30" font-size="9.30" fill="#d0d0d0" text-anchor="start" textLength="11.40" lengthAdjust="spacingAndGlyphs" stroke="#d0d0d0" stroke-width="0.25">TPC</text>
<text x="767.09" y="535.90" font-size="9.16" fill="#d6d6d6" text-anchor="start" textLength="9.20" lengthAdjust="spacingAndGlyphs" stroke="#d6d6d6" stroke-width="0.25">SM</text>
<text x="767.09" y="467.60" font-size="9.16" fill="#d6d6d6" text-anchor="start" textLength="9.20" lengthAdjust="spacingAndGlyphs" stroke="#d6d6d6" stroke-width="0.25">SM</text>
<text x="789.05" y="551.30" font-size="9.30" fill="#d0d0d0" text-anchor="start" textLength="11.40" lengthAdjust="spacingAndGlyphs" stroke="#d0d0d0" stroke-width="0.25">TPC</text>
<text x="792.05" y="535.90" font-size="9.16" fill="#d6d6d6" text-anchor="start" textLength="9.20" lengthAdjust="spacingAndGlyphs" stroke="#d6d6d6" stroke-width="0.25">SM</text>
<text x="792.05" y="467.60" font-size="9.16" fill="#d6d6d6" text-anchor="start" textLength="9.20" lengthAdjust="spacingAndGlyphs" stroke="#d6d6d6" stroke-width="0.25">SM</text>
<rect x="816.30" y="54.90" width="154.70" height="198.05" fill="#3f3f3f" stroke="#ababab" stroke-width="1.3"/>
<use href="#gpc" x="815.65" y="0"/>
<rect x="819.65" y="66.90" width="147.90" height="11.60" fill="#1f5869" stroke="#1f3238" stroke-width="1.0"/>
<text x="817.95" y="63.80" font-size="9.59" fill="#d0d0d0" text-anchor="start" textLength="11.80" lengthAdjust="spacingAndGlyphs" stroke="#d0d0d0" stroke-width="0.25">GPC</text>
<text x="893.60" y="75.90" font-size="9.88" fill="#a9d2de" text-anchor="middle" textLength="38.20" lengthAdjust="spacingAndGlyphs" stroke="#a9d2de" stroke-width="0.25">Raster Engine</text>
<text x="821.25" y="91.60" font-size="9.59" fill="#cacaca" text-anchor="start" textLength="11.40" lengthAdjust="spacingAndGlyphs" stroke="#cacaca" stroke-width="0.25">TPC</text>
<text x="824.25" y="106.60" font-size="9.16" fill="#d6d6d6" text-anchor="start" textLength="9.20" lengthAdjust="spacingAndGlyphs" stroke="#d6d6d6" stroke-width="0.25">SM</text>
<text x="824.25" y="174.90" font-size="9.16" fill="#d6d6d6" text-anchor="start" textLength="9.20" lengthAdjust="spacingAndGlyphs" stroke="#d6d6d6" stroke-width="0.25">SM</text>
<text x="846.21" y="91.60" font-size="9.59" fill="#cacaca" text-anchor="start" textLength="11.40" lengthAdjust="spacingAndGlyphs" stroke="#cacaca" stroke-width="0.25">TPC</text>
<text x="849.21" y="106.60" font-size="9.16" fill="#d6d6d6" text-anchor="start" textLength="9.20" lengthAdjust="spacingAndGlyphs" stroke="#d6d6d6" stroke-width="0.25">SM</text>
<text x="849.21" y="174.90" font-size="9.16" fill="#d6d6d6" text-anchor="start" textLength="9.20" lengthAdjust="spacingAndGlyphs" stroke="#d6d6d6" stroke-width="0.25">SM</text>
<text x="871.17" y="91.60" font-size="9.59" fill="#cacaca" text-anchor="start" textLength="11.40" lengthAdjust="spacingAndGlyphs" stroke="#cacaca" stroke-width="0.25">TPC</text>
<text x="874.17" y="106.60" font-size="9.16" fill="#d6d6d6" text-anchor="start" textLength="9.20" lengthAdjust="spacingAndGlyphs" stroke="#d6d6d6" stroke-width="0.25">SM</text>
<text x="874.17" y="174.90" font-size="9.16" fill="#d6d6d6" text-anchor="start" textLength="9.20" lengthAdjust="spacingAndGlyphs" stroke="#d6d6d6" stroke-width="0.25">SM</text>
<text x="896.13" y="91.60" font-size="9.59" fill="#cacaca" text-anchor="start" textLength="11.40" lengthAdjust="spacingAndGlyphs" stroke="#cacaca" stroke-width="0.25">TPC</text>
<text x="899.13" y="106.60" font-size="9.16" fill="#d6d6d6" text-anchor="start" textLength="9.20" lengthAdjust="spacingAndGlyphs" stroke="#d6d6d6" stroke-width="0.25">SM</text>
<text x="899.13" y="174.90" font-size="9.16" fill="#d6d6d6" text-anchor="start" textLength="9.20" lengthAdjust="spacingAndGlyphs" stroke="#d6d6d6" stroke-width="0.25">SM</text>
<text x="921.09" y="91.60" font-size="9.59" fill="#cacaca" text-anchor="start" textLength="11.40" lengthAdjust="spacingAndGlyphs" stroke="#cacaca" stroke-width="0.25">TPC</text>
<text x="924.09" y="106.60" font-size="9.16" fill="#d6d6d6" text-anchor="start" textLength="9.20" lengthAdjust="spacingAndGlyphs" stroke="#d6d6d6" stroke-width="0.25">SM</text>
<text x="924.09" y="174.90" font-size="9.16" fill="#d6d6d6" text-anchor="start" textLength="9.20" lengthAdjust="spacingAndGlyphs" stroke="#d6d6d6" stroke-width="0.25">SM</text>
<text x="946.05" y="91.60" font-size="9.59" fill="#cacaca" text-anchor="start" textLength="11.40" lengthAdjust="spacingAndGlyphs" stroke="#cacaca" stroke-width="0.25">TPC</text>
<text x="949.05" y="106.60" font-size="9.16" fill="#d6d6d6" text-anchor="start" textLength="9.20" lengthAdjust="spacingAndGlyphs" stroke="#d6d6d6" stroke-width="0.25">SM</text>
<text x="949.05" y="174.90" font-size="9.16" fill="#d6d6d6" text-anchor="start" textLength="9.20" lengthAdjust="spacingAndGlyphs" stroke="#d6d6d6" stroke-width="0.25">SM</text>
<rect x="816.30" y="389.40" width="154.70" height="198.90" fill="#3f3f3f" stroke="#ababab" stroke-width="1.3"/>
<use href="#gpc" transform="translate(815.65,638.0) scale(1,-1)"/>
<rect x="819.65" y="558.80" width="147.90" height="11.40" fill="#1f5869" stroke="#1f3238" stroke-width="1.0"/>
<text x="817.95" y="580.60" font-size="9.88" fill="#d0d0d0" text-anchor="start" textLength="11.80" lengthAdjust="spacingAndGlyphs" stroke="#d0d0d0" stroke-width="0.25">GPC</text>
<text x="893.60" y="567.70" font-size="9.88" fill="#a9d2de" text-anchor="middle" textLength="38.20" lengthAdjust="spacingAndGlyphs" stroke="#a9d2de" stroke-width="0.25">Raster Engine</text>
<text x="821.25" y="551.30" font-size="9.30" fill="#d0d0d0" text-anchor="start" textLength="11.40" lengthAdjust="spacingAndGlyphs" stroke="#d0d0d0" stroke-width="0.25">TPC</text>
<text x="824.25" y="535.90" font-size="9.16" fill="#d6d6d6" text-anchor="start" textLength="9.20" lengthAdjust="spacingAndGlyphs" stroke="#d6d6d6" stroke-width="0.25">SM</text>
<text x="824.25" y="467.60" font-size="9.16" fill="#d6d6d6" text-anchor="start" textLength="9.20" lengthAdjust="spacingAndGlyphs" stroke="#d6d6d6" stroke-width="0.25">SM</text>
<text x="846.21" y="551.30" font-size="9.30" fill="#d0d0d0" text-anchor="start" textLength="11.40" lengthAdjust="spacingAndGlyphs" stroke="#d0d0d0" stroke-width="0.25">TPC</text>
<text x="849.21" y="535.90" font-size="9.16" fill="#d6d6d6" text-anchor="start" textLength="9.20" lengthAdjust="spacingAndGlyphs" stroke="#d6d6d6" stroke-width="0.25">SM</text>
<text x="849.21" y="467.60" font-size="9.16" fill="#d6d6d6" text-anchor="start" textLength="9.20" lengthAdjust="spacingAndGlyphs" stroke="#d6d6d6" stroke-width="0.25">SM</text>
<text x="871.17" y="551.30" font-size="9.30" fill="#d0d0d0" text-anchor="start" textLength="11.40" lengthAdjust="spacingAndGlyphs" stroke="#d0d0d0" stroke-width="0.25">TPC</text>
<text x="874.17" y="535.90" font-size="9.16" fill="#d6d6d6" text-anchor="start" textLength="9.20" lengthAdjust="spacingAndGlyphs" stroke="#d6d6d6" stroke-width="0.25">SM</text>
<text x="874.17" y="467.60" font-size="9.16" fill="#d6d6d6" text-anchor="start" textLength="9.20" lengthAdjust="spacingAndGlyphs" stroke="#d6d6d6" stroke-width="0.25">SM</text>
<text x="896.13" y="551.30" font-size="9.30" fill="#d0d0d0" text-anchor="start" textLength="11.40" lengthAdjust="spacingAndGlyphs" stroke="#d0d0d0" stroke-width="0.25">TPC</text>
<text x="899.13" y="535.90" font-size="9.16" fill="#d6d6d6" text-anchor="start" textLength="9.20" lengthAdjust="spacingAndGlyphs" stroke="#d6d6d6" stroke-width="0.25">SM</text>
<text x="899.13" y="467.60" font-size="9.16" fill="#d6d6d6" text-anchor="start" textLength="9.20" lengthAdjust="spacingAndGlyphs" stroke="#d6d6d6" stroke-width="0.25">SM</text>
<text x="921.09" y="551.30" font-size="9.30" fill="#d0d0d0" text-anchor="start" textLength="11.40" lengthAdjust="spacingAndGlyphs" stroke="#d0d0d0" stroke-width="0.25">TPC</text>
<text x="924.09" y="535.90" font-size="9.16" fill="#d6d6d6" text-anchor="start" textLength="9.20" lengthAdjust="spacingAndGlyphs" stroke="#d6d6d6" stroke-width="0.25">SM</text>
<text x="924.09" y="467.60" font-size="9.16" fill="#d6d6d6" text-anchor="start" textLength="9.20" lengthAdjust="spacingAndGlyphs" stroke="#d6d6d6" stroke-width="0.25">SM</text>
<text x="946.05" y="551.30" font-size="9.30" fill="#d0d0d0" text-anchor="start" textLength="11.40" lengthAdjust="spacingAndGlyphs" stroke="#d0d0d0" stroke-width="0.25">TPC</text>
<text x="949.05" y="535.90" font-size="9.16" fill="#d6d6d6" text-anchor="start" textLength="9.20" lengthAdjust="spacingAndGlyphs" stroke="#d6d6d6" stroke-width="0.25">SM</text>
<text x="949.05" y="467.60" font-size="9.16" fill="#d6d6d6" text-anchor="start" textLength="9.20" lengthAdjust="spacingAndGlyphs" stroke="#d6d6d6" stroke-width="0.25">SM</text>
</svg>
</body></html>
